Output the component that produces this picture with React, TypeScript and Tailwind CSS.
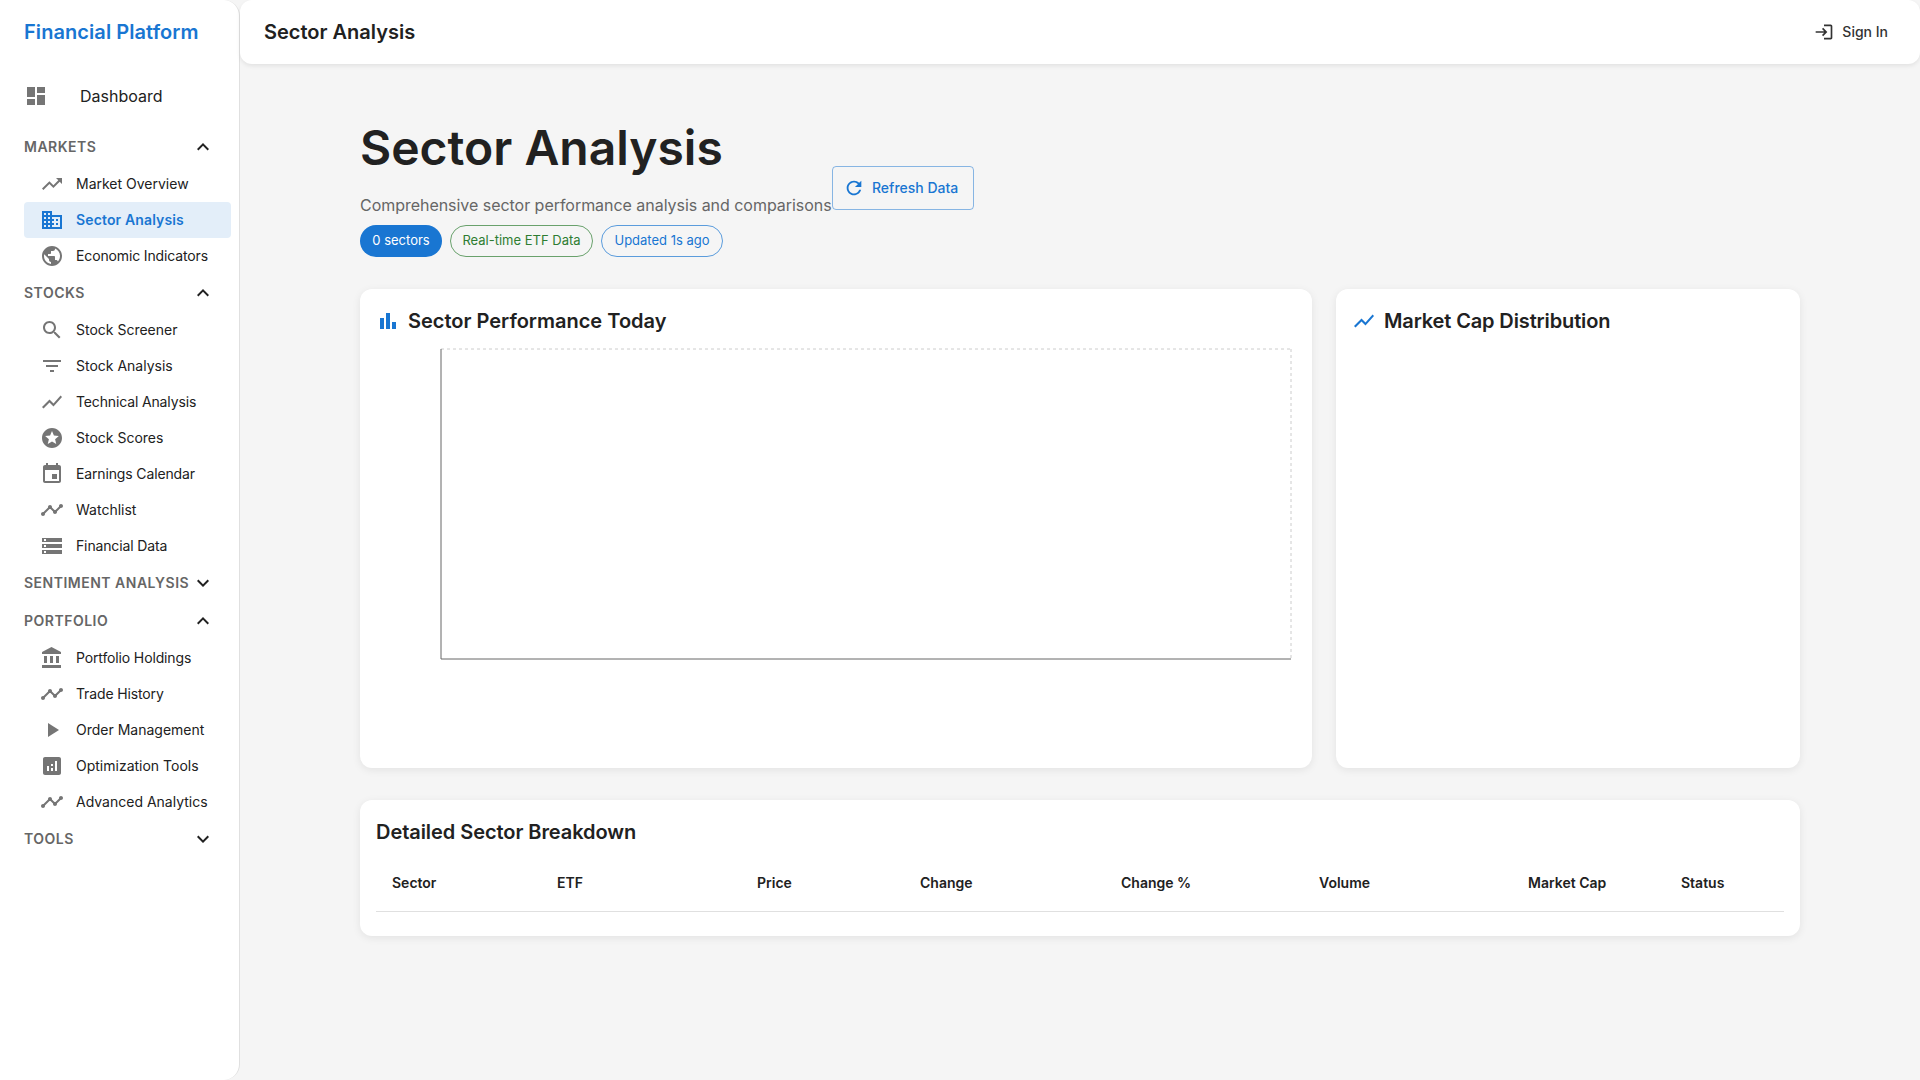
const d = {
  dashboard: "M3 13h8V3H3v10zm0 8h8v-6H3v6zm10 0h8V11h-8v10zm0-18v6h8V3h-8z",
  trendingUp: "M16 6l2.29 2.29-4.88 4.88-4-4L2 16.59 3.41 18l6-6 4 4 6.3-6.29L22 12V6z",
  business:
    "M12 7V3H2v18h20V7H12zM6 19H4v-2h2v2zm0-4H4v-2h2v2zm0-4H4V9h2v2zm0-4H4V5h2v2zm4 12H8v-2h2v2zm0-4H8v-2h2v2zm0-4H8V9h2v2zm0-4H8V5h2v2zm10 12h-8v-2h2v-2h-2v-2h2v-2h-2V9h8v10zm-2-8h-2v2h2v-2zm0 4h-2v2h2v-2z",
  publicGlobe:
    "M12 2C6.48 2 2 6.48 2 12s4.48 10 10 10 10-4.48 10-10S17.52 2 12 2zm-1 17.93c-3.95-.49-7-3.85-7-7.93 0-.62.08-1.21.21-1.79L9 15v1c0 1.1.9 2 2 2v1.93zm6.9-2.54c-.26-.81-1-1.39-1.9-1.39h-1v-3c0-.55-.45-1-1-1H8v-2h2c.55 0 1-.45 1-1V7h2c1.1 0 2-.9 2-2v-.41c2.93 1.19 5 4.06 5 7.41 0 2.08-.8 3.97-2.1 5.39z",
  search:
    "M15.5 14h-.79l-.28-.27C15.41 12.59 16 11.11 16 9.5 16 5.91 13.09 3 9.5 3S3 5.91 3 9.5 5.91 16 9.5 16c1.61 0 3.09-.59 4.23-1.57l.27.28v.79l5 4.99L20.49 19l-4.99-5zm-6 0C7.01 14 5 11.99 5 9.5S7.01 5 9.5 5 14 7.01 14 9.5 11.99 14 9.5 14z",
  filter: "M10 18h4v-2h-4v2zM3 6v2h18V6H3zm3 7h12v-2H6v2z",
  showChart: "M3.5 18.49l6-6.01 4 4L22 6.92l-1.41-1.41-7.09 7.97-4-4L2 16.99z",
  stars:
    "M11.99 2C6.47 2 2 6.48 2 12s4.47 10 9.99 10C17.52 22 22 17.52 22 12S17.52 2 11.99 2zm4.24 16L12 15.45 7.77 18l1.12-4.81-3.73-3.23 4.92-.42L12 5l1.92 4.53 4.92.42-3.73 3.23L16.23 18z",
  event:
    "M17 12h-5v5h5v-5zM16 1v2H8V1H6v2H5c-1.11 0-1.99.9-1.99 2L3 19c0 1.1.89 2 2 2h14c1.1 0 2-.9 2-2V5c0-1.1-.9-2-2-2h-1V1h-2zm3 18H5V8h14v11z",
  timeline:
    "M23 8c0 1.1-.9 2-2 2-.18 0-.35-.02-.51-.07l-3.56 3.55c.05.16.07.34.07.52 0 1.1-.9 2-2 2s-2-.9-2-2c0-.18.02-.36.07-.52l-2.55-2.55c-.16.05-.34.07-.52.07s-.36-.02-.52-.07l-4.55 4.56c.05.16.07.33.07.51 0 1.1-.9 2-2 2s-2-.9-2-2 .9-2 2-2c.18 0 .35.02.51.07l4.56-4.55C8.02 9.36 8 9.18 8 9c0-1.1.9-2 2-2s2 .9 2 2c0 .18-.02.36-.07.52l2.55 2.55c.16-.05.34-.07.52-.07s.36.02.52.07l3.55-3.56C19.02 8.35 19 8.18 19 8c0-1.1.9-2 2-2s2 .9 2 2z",
  storage: "M2 20h20v-4H2v4zm2-3h2v2H4v-2zM2 4v4h20V4H2zm4 3H4V5h2v2zm-4 7h20v-4H2v4zm2-3h2v2H4v-2z",
  bank: "M4 10v7h3v-7H4zm6 0v7h3v-7h-3zM2 22h19v-3H2v3zm14-12v7h3v-7h-3zm-4.5-9L2 6v2h19V6l-9.5-5z",
  play: "M8 5v14l11-7z",
  analytics:
    "M19 3H5c-1.1 0-2 .9-2 2v14c0 1.1.9 2 2 2h14c1.1 0 2-.9 2-2V5c0-1.1-.9-2-2-2zM9 17H7v-5h2v5zm4 0h-2v-3h2v3zm0-5h-2v-2h2v2zm4 5h-2V7h2v10z",
  barChart: "M4 9h4v11H4zm12 4h4v7h-4zm-6-9h4v16h-4z",
  login:
    "M11 7 9.6 8.4l2.6 2.6H2v2h10.2l-2.6 2.6L11 17l5-5-5-5zm9 12h-8v2h8c1.1 0 2-.9 2-2V5c0-1.1-.9-2-2-2h-8v2h8v14z",
  refresh:
    "M17.65 6.35C16.2 4.9 14.21 4 12 4c-4.42 0-7.99 3.58-7.99 8s3.57 8 7.99 8c3.73 0 6.84-2.55 7.73-6h-2.08c-.82 2.33-3.04 4-5.65 4-3.31 0-6-2.69-6-6s2.69-6 6-6c1.66 0 3.14.69 4.22 1.78L13 11h7V4l-2.35 2.35z",
  less: "M12 8l-6 6 1.41 1.41L12 10.83l4.59 4.58L18 14z",
  more: "M16.59 8.59L12 13.17 7.41 8.59 6 10l6 6 6-6z",
};

function Icon({ path, className }: { path: string; className: string }) {
  return (
    <svg viewBox="0 0 24 24" className={className} fill="currentColor" aria-hidden="true">
      <path d={path} />
    </svg>
  );
}

type Item = { label: string; icon: string; active?: boolean; tight?: boolean };
type Section = { title: string; open: boolean; items: Item[] };

const sections: Section[] = [
  {
    title: "Markets",
    open: true,
    items: [
      { label: "Market Overview", icon: d.trendingUp },
      { label: "Sector Analysis", icon: d.business, active: true },
      { label: "Economic Indicators", icon: d.publicGlobe, tight: true },
    ],
  },
  {
    title: "Stocks",
    open: true,
    items: [
      { label: "Stock Screener", icon: d.search },
      { label: "Stock Analysis", icon: d.filter },
      { label: "Technical Analysis", icon: d.showChart, tight: true },
      { label: "Stock Scores", icon: d.stars },
      { label: "Earnings Calendar", icon: d.event, tight: true },
      { label: "Watchlist", icon: d.timeline },
      { label: "Financial Data", icon: d.storage, tight: true },
    ],
  },
  { title: "Sentiment Analysis", open: false, items: [] },
  {
    title: "Portfolio",
    open: true,
    items: [
      { label: "Portfolio Holdings", icon: d.bank, tight: true },
      { label: "Trade History", icon: d.timeline, tight: true },
      { label: "Order Management", icon: d.play },
      { label: "Optimization Tools", icon: d.analytics },
      { label: "Advanced Analytics", icon: d.timeline },
    ],
  },
  { title: "Tools", open: false, items: [] },
];

const columns = [
  { label: "Sector", w: "w-[165px]" },
  { label: "ETF", w: "w-[200px]" },
  { label: "Price", w: "w-[163px]" },
  { label: "Change", w: "w-[201px]" },
  { label: "Change %", w: "w-[198px]" },
  { label: "Volume", w: "w-[209px]" },
  { label: "Market Cap", w: "w-[153px]" },
  { label: "Status", w: "w-[119px]" },
];

function Sidebar() {
  return (
    <aside className="w-[240px] shrink-0 min-h-[1080px] bg-white border-r border-[#e0e0e0] rounded-r-2xl">
      <div className="h-[64px] pl-6 flex items-center">
        <span className="text-[20px] font-semibold tracking-[0.07px] text-[#1976d2]">Financial Platform</span>
      </div>
      <div className="mt-2 h-[48px] pl-6 flex items-center text-[#212121]">
        <Icon path={d.dashboard} className="w-6 h-6 text-[#757575]" />
        <span className="ml-8 text-base">Dashboard</span>
      </div>
      <nav className="mt-2">
        {sections.map((s) => (
          <div key={s.title}>
            <div className="h-[38px] pl-6 pr-6 flex items-center justify-between">
              <span className="text-sm font-semibold uppercase tracking-[0.5px] text-[#666666]">{s.title}</span>
              <Icon path={s.open ? d.less : d.more} className="w-6 h-6 text-[#212121]" />
            </div>
            {s.items.map((it) => (
              <div
                key={it.label}
                className={`ml-6 mr-2 h-9 pl-4 flex items-center rounded ${it.active ? "bg-[#e3eef9] text-[#1976d2] font-semibold tracking-[0.14px]" : "text-[#212121]"} ${it.tight ? "tracking-[-0.14px]" : ""}`}
              >
                <Icon path={it.icon} className={`w-6 h-6 ${it.active ? "text-[#1976d2]" : "text-[#757575]"}`} />
                <span className="ml-3 text-sm">{it.label}</span>
              </div>
            ))}
          </div>
        ))}
      </nav>
    </aside>
  );
}

function Chip({ children, className }: { children: string; className: string }) {
  return (
    <span className={`h-8 inline-flex items-center justify-center rounded-2xl text-[13px] ${className}`}>{children}</span>
  );
}

// recharts-style empty plot: grid lines sit on whole pixels, so they blur over two rows
function EmptyPlot() {
  return (
    <svg width="920" height="320" className="block mt-[11px]" aria-hidden="true">
      <line x1="65" y1="1" x2="915" y2="1" stroke="#cccccc" strokeDasharray="3 3" />
      <line x1="915" y1="1" x2="915" y2="311" stroke="#cccccc" strokeDasharray="3 3" />
      <line x1="65" y1="1" x2="65" y2="311" stroke="#666666" />
      <line x1="65" y1="311" x2="915" y2="311" stroke="#666666" />
    </svg>
  );
}

export default function App() {
  return (
    <div className="flex min-h-[1080px] bg-[#f5f5f5] font-['Inter',sans-serif] text-[#212121]">
      <Sidebar />
      <div className="flex-1 min-w-0">
        <header className="h-[64px] pl-6 pr-8 bg-white rounded-xl shadow-[0_2px_4px_rgba(0,0,0,0.08)] flex items-center justify-between">
          <h2 className="text-[20px] font-semibold">Sector Analysis</h2>
          <div className="flex items-center gap-2 text-sm font-medium text-[#333333]">
            <Icon path={d.login} className="w-5 h-5" />
            Sign In
          </div>
        </header>

        <main className="pt-[55px] px-[120px]">
          <div className="flex items-center mb-8">
            <div>
              <h1 className="text-[48px] leading-[58px] font-semibold mb-4">Sector Analysis</h1>
              <p className="text-base leading-6 tracking-[-0.035px] text-[#666666] mb-2">
                Comprehensive sector performance analysis and comparisons
              </p>
              <div className="flex gap-2">
                <Chip className="w-[82px] bg-[#1976d2] text-white">0 sectors</Chip>
                <Chip className="w-[143px] border border-[#2e7d32]/70 text-[#2e7d32]">Real-time ETF Data</Chip>
                <Chip className="w-[122px] border border-[#1976d2]/70 text-[#1976d2]">Updated 1s ago</Chip>
              </div>
            </div>
            <button className="h-[44px] w-[142px] pr-1 flex items-center justify-center gap-[7px] border border-[#1976d2]/50 rounded text-sm font-medium text-[#1976d2]">
              <Icon path={d.refresh} className="w-[22px] h-[22px]" />
              Refresh Data
            </button>
          </div>

          <div className="flex gap-6 mb-8">
            <section className="w-[952px] h-[479px] p-4 bg-white rounded-xl shadow-[0_2px_8px_rgba(0,0,0,0.08)]">
              <div className="h-8 flex items-center gap-2">
                <Icon path={d.barChart} className="w-6 h-6 text-[#1976d2]" />
                <h3 className="text-[20px] font-semibold">Sector Performance Today</h3>
              </div>
              <EmptyPlot />
            </section>
            <section className="w-[464px] h-[479px] p-4 bg-white rounded-xl shadow-[0_2px_8px_rgba(0,0,0,0.08)]">
              <div className="h-8 flex items-center gap-2">
                <Icon path={d.showChart} className="w-6 h-6 text-[#1976d2]" />
                <h3 className="text-[20px] font-semibold tracking-[-0.13px]">Market Cap Distribution</h3>
              </div>
            </section>
          </div>

          <section className="h-[136px] px-4 pt-[17px] bg-white rounded-xl shadow-[0_2px_8px_rgba(0,0,0,0.08)]">
            <h3 className="text-[20px] leading-[30px] tracking-[-0.06px] font-semibold">Detailed Sector Breakdown</h3>
            <table className="mt-[5px] w-full table-fixed border-collapse">
              <thead>
                <tr className="border-b border-[#e0e0e0]">
                  {columns.map((c) => (
                    <th key={c.label} className={`${c.w} h-[59px] pl-4 pt-1 text-left text-sm font-semibold`}>
                      {c.label}
                    </th>
                  ))}
                </tr>
              </thead>
            </table>
          </section>
        </main>
      </div>
    </div>
  );
}
